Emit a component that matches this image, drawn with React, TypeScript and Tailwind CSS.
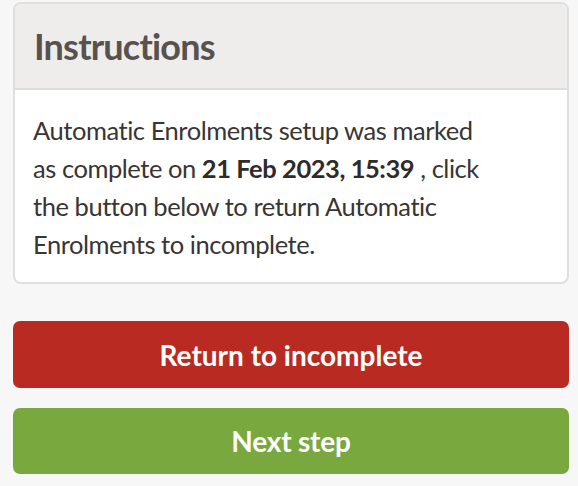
import React from "react";

export default function App() {
  return (
    <div className="min-h-[486px] w-full bg-[#f7f7f7] pl-[13px] pr-[9px] pt-[2px] font-['Lato',sans-serif]">
      <div className="overflow-hidden rounded-[8px] border-2 border-[#e0dfdf] bg-white">
        <div className="flex h-[86px] items-center border-b-2 border-[#dedddc] bg-[#eeedeb] px-[19px]">
          <h2 className="text-[36px] font-bold leading-none tracking-[-0.8px] text-[#58524f]">Instructions</h2>
        </div>
        <div className="px-[18px] pb-[19px] pt-[21px] text-[25.5px] leading-[38px] tracking-[-0.45px] text-[#393533]">
          <p>
            Automatic Enrolments setup was marked
            <br />
            as complete on <strong className="font-bold text-[#2f2b29]">21 Feb 2023, 15:39</strong> , click
            <br />
            the button below to return Automatic
            <br />
            Enrolments to incomplete.
          </p>
        </div>
      </div>
      <div className="mt-[37px] flex flex-col gap-[20px]">
        <button className="flex h-[67px] w-full items-center justify-center rounded-[7px] bg-[#b92b22] text-[28px] font-bold tracking-[0px] text-white">
          Return to incomplete
        </button>
        <button className="flex h-[66px] w-full items-center justify-center rounded-[7px] bg-[#79a83f] text-[28px] font-bold tracking-[-0.2px] text-white">
          Next step
        </button>
      </div>
    </div>
  );
}
